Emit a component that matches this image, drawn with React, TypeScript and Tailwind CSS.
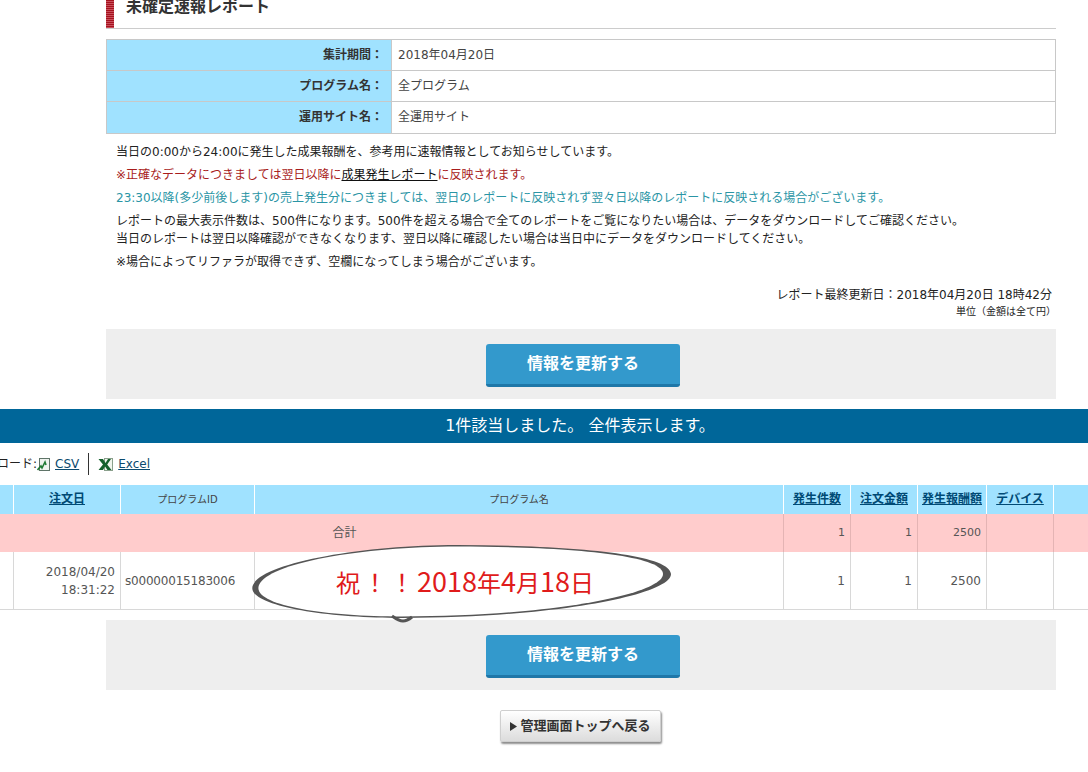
import React from 'react';

const font = { fontFamily: '"DejaVu Sans", "Noto Sans CJK JP", sans-serif' };

const InfoRow = ({ label, value, last }: { label: string; value: string; last?: boolean }) => (
  <div className={`flex h-[31px] ${last ? '' : 'border-b border-[#c8c8c8]'}`}>
    <div className={`w-[284px] bg-[#a0e2ff] flex items-center justify-end pr-[8px] text-[12px] font-bold text-[#333] ${last ? 'pb-[2px]' : ''}`}>{label}：</div>
    <div className={`flex-1 flex items-center pl-[6px] text-[12px] text-[#444] border-l border-[#c8c8c8] ${last ? 'pb-[2px]' : ''}`}>{value}</div>
  </div>
);

const UpdateBand = () => (
  <div className="ml-[106px] w-[950px] h-[70px] bg-[#eeeeee] flex items-center justify-center pl-[4px]">
    <div className="w-[194px] h-[43px] mt-[3px] rounded-[3px] bg-[#3399cc] border-b-[3px] border-[#1f77a8] flex items-center justify-center text-white font-bold text-[16px]">
      情報を更新する
    </div>
  </div>
);

const cols = 'grid grid-cols-[14px_107px_134px_529px_67px_67px_69px_67px_1fr]';

const HeadLink = ({ children }: { children: React.ReactNode }) => (
  <div className="flex items-center justify-center pb-[2px] border-r border-white text-[12px] font-bold underline text-[#004a75]">{children}</div>
);

const Cell = ({ children, className = '' }: { children?: React.ReactNode; className?: string }) => (
  <div className={`border-r border-[#d8d8d8] flex items-center text-[12px] text-[#555] ${className}`}>{children}</div>
);

const PinkCell = ({ children }: { children?: React.ReactNode }) => (
  <div className="flex items-center justify-end pr-[5px] border-r border-[#e4b4b4] text-[11px] text-[#555]">{children}</div>
);

const CsvIcon = () => (
  <svg width="14" height="15" viewBox="0 0 14 15">
    <rect x="2.5" y="1.5" width="10" height="12" fill="#eef3ee" stroke="#5f7468" />
    <path d="M0.5 13 L4 9 L5 11 L8 5 L9 8" fill="none" stroke="#1f7a34" strokeWidth="1.6" />
  </svg>
);

const ExcelIcon = () => (
  <svg width="16" height="15" viewBox="0 0 16 15">
    <rect x="6.5" y="1.5" width="8" height="12" fill="#f1f5ee" stroke="#8aa08c" />
    <path d="M0.5 2 L5 2 L7.5 6 L10 2 L13 2 L9.2 7.5 L13.5 13 L9.5 13 L7 9.5 L5 13 L0.5 13 L5 7.5 Z" fill="#14602c" />
  </svg>
);

export default function App() {
  return (
    <div className="w-[1088px] h-[772px] overflow-hidden bg-white relative" style={font}>
      <div className="ml-[106px] mr-[32px] h-[29px] border-b border-[#cccccc] flex">
        <div className="w-[8px] h-[28px] bg-[linear-gradient(#a5121f_50%,#c9505c_50%)] bg-[length:2px_2px]" />
        <div className="pl-[12px] -mt-[5px] text-[16px] font-bold text-[#333] leading-[24px]">未確定速報レポート</div>
      </div>

      <div className="ml-[106px] w-[950px] mt-[10px] border border-[#c8c8c8]">
        <InfoRow label="集計期間" value="2018年04月20日" />
        <InfoRow label="プログラム名" value="全プログラム" />
        <InfoRow label="運用サイト名" value="全運用サイト" last />
      </div>

      <div className="ml-[116px] mt-[9px] text-[12px] text-[#222] leading-[18px]">
        <p>当日の0:00から24:00に発生した成果報酬を、参考用に速報情報としてお知らせしています。</p>
        <p className="mt-[5px] text-[#a81c1c]">※正確なデータにつきましては翌日以降に<span className="underline text-[#111]">成果発生レポート</span>に反映されます。</p>
        <p className="mt-[5px] text-[#2a95a5]">23:30以降(多少前後します)の売上発生分につきましては、翌日のレポートに反映されず翌々日以降のレポートに反映される場合がございます。</p>
        <p className="mt-[5px]">レポートの最大表示件数は、500件になります。500件を超える場合で全てのレポートをご覧になりたい場合は、データをダウンロードしてご確認ください。</p>
        <p>当日のレポートは翌日以降確認ができなくなります、翌日以降に確認したい場合は当日中にデータをダウンロードしてください。</p>
        <p className="mt-[5px]">※場合によってリファラが取得できず、空欄になってしまう場合がございます。</p>
      </div>

      <div className="mr-[36px] mt-[15px] text-right text-[12px] text-[#222] leading-[18px]">レポート最終更新日：2018年04月20日 18時42分</div>
      <div className="mr-[32px] text-right text-[10px] text-[#222] leading-[16px]">単位（金額は全て円）</div>

      <div className="mt-[9px]"><UpdateBand /></div>

      <div className="mt-[10px] h-[34px] bg-[#006699] flex items-center justify-center pl-[72px] text-white text-[16px]">
        1件該当しました。 全件表示します。
      </div>

      <div className="h-[42px] flex items-center text-[12px] text-[#222]">
        <div className="w-[37px] flex justify-end overflow-hidden whitespace-nowrap">ダウンロード:</div>
        <CsvIcon />
        <span className="ml-[4px] underline text-[#0b4a6e]">CSV</span>
        <div className="ml-[9px] w-px h-[22px] bg-[#333]" />
        <div className="ml-[9px] flex"><ExcelIcon /></div>
        <span className="ml-[4px] underline text-[#0b4a6e]">Excel</span>
      </div>

      <div className={`${cols} h-[29px] bg-[#a0e2ff]`}>
        <div className="border-r border-white" />
        <HeadLink>注文日</HeadLink>
        <div className="flex items-center justify-center border-r border-white text-[10px] text-[#444]">プログラムID</div>
        <div className="flex items-center justify-center border-r border-white text-[10px] text-[#444]">プログラム名</div>
        <HeadLink>発生件数</HeadLink>
        <HeadLink>注文金額</HeadLink>
        <HeadLink>発生報酬額</HeadLink>
        <HeadLink>デバイス</HeadLink>
        <div />
      </div>

      <div className={`${cols} h-[38px] bg-[#ffcccc]`}>
        <div className="col-span-4 flex items-center justify-center pr-[94px] border-r border-[#e4b4b4] text-[12px] text-[#555]">
          合計
        </div>
        <PinkCell>1</PinkCell>
        <PinkCell>1</PinkCell>
        <PinkCell>2500</PinkCell>
        <PinkCell />
        <div />
      </div>

      <div className={`${cols} h-[58px] border-b border-[#d8d8d8]`}>
        <Cell />
        <Cell className="justify-end text-right pr-[5px] leading-[18px]">2018/04/20<br />18:31:22</Cell>
        <Cell className="pl-[4px] tracking-[-0.2px]">s00000015183006</Cell>
        <Cell />
        <Cell className="justify-end pr-[5px] text-[11px]">1</Cell>
        <Cell className="justify-end pr-[5px] text-[11px]">1</Cell>
        <Cell className="justify-end pr-[5px] text-[11px]">2500</Cell>
        <Cell />
        <div />
      </div>

      <div className="mt-[10px]"><UpdateBand /></div>

      <div className="mt-[20px] ml-[500px] w-[161px] h-[32px] rounded-[2px] border border-[#cfcfcf] bg-gradient-to-b from-white to-[#dcdcdc] shadow-[1px_2px_2px_rgba(0,0,0,0.45)] flex items-center justify-center gap-[3px] text-[13px] font-bold text-[#333]">
        <svg width="7" height="9" viewBox="0 0 7 9"><path d="M0 0 L7 4.5 L0 9 Z" fill="#333" /></svg>
        管理画面トップへ戻る
      </div>

      {/* speech bubble pasted over the table */}
      <div className="absolute left-[252px] top-[543px] w-[422px] h-[82px]">
        <svg width="422" height="82" viewBox="0 0 422 82" className="absolute inset-0">
          <path d="M1 42 C10 20 110 2 205 2 C310 2 419 10 419 31 C419 52 300 75 150 75 C70 75 -8 62 1 42Z" fill="#555" />
          <path d="M7 42 C16 20 110 3.5 205 3.5 C310 3.5 411 11 411 31 C411 51 300 73.5 150 73.5 C70 73.5 -1 62 7 42Z" fill="#fff" />
          <path d="M140 73 Q147 78 151 78 Q155 78 160 74" fill="none" stroke="#555" strokeWidth="3" />
        </svg>
        <div className="absolute left-[84px] top-[20px] text-[24px] leading-[36px] text-[#e01b1b] whitespace-nowrap" style={{ fontFamily: '"Noto Sans CJK JP", sans-serif' }}>
          <span className="tracking-[3px]">祝！！</span><span className="text-[27px]">2018</span>年<span className="text-[27px]">4</span>月<span className="text-[27px]">18</span>日
        </div>
      </div>
    </div>
  );
}
